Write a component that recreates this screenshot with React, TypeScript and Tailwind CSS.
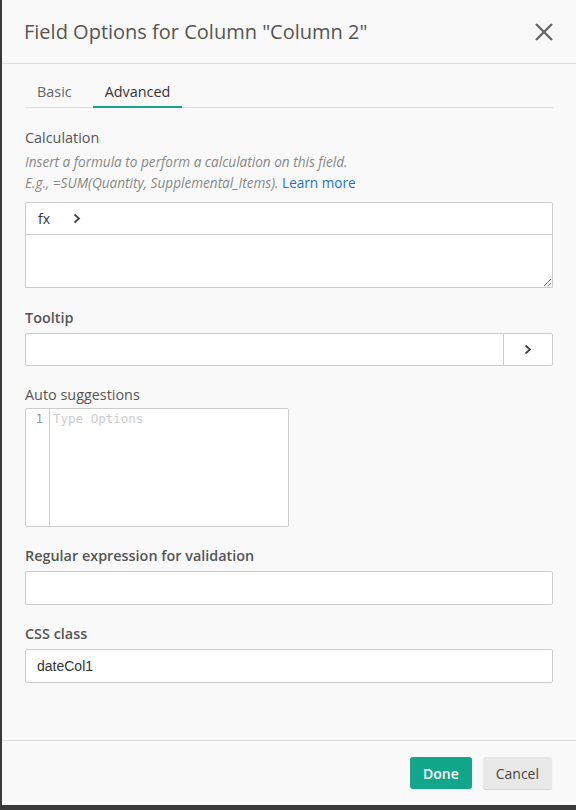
import React from "react";

const Label = ({ children, bold }: { children: React.ReactNode; bold?: boolean }) => (
  <div className={`text-[14.4px] leading-[20px] text-[#555] ${bold ? "font-semibold" : "font-normal"}`}>{children}</div>
);

const Chevron = () => (
  <svg width="8" height="11" viewBox="0 0 8 11" fill="none">
    <path d="M1.5 1.5 L6 5.5 L1.5 9.5" stroke="#444" strokeWidth="1.8" />
  </svg>
);

export default function App() {
  return (
    <div className="h-[810px] w-[576px] bg-[#3a3a3a] pl-[2px] pb-[5px] font-['Open_Sans',sans-serif]">
      <div className="flex h-full flex-col bg-[#f9f9f9]">
        {/* header */}
        <div className="flex h-[64px] items-center justify-between border-b border-[#dedede] pl-[22px] pr-[22px]">
          <h1 className="text-[20px] font-normal text-[#555]">Field Options for Column "Column 2"</h1>
          <svg width="20" height="20" viewBox="0 0 20 20">
            <path d="M2 2 L18 18 M18 2 L2 18" stroke="#666" strokeWidth="2.4" />
          </svg>
        </div>

        {/* body */}
        <div className="flex-1 pl-[23px] pr-[23px]">
          {/* tabs */}
          <div className="mt-[18px] flex border-b border-[#ddd] text-[14.4px] leading-[20px]">
            <div className="-mb-px border-b-2 border-transparent px-[12px] pb-[4px] text-[#666]">Basic</div>
            <div className="-mb-px ml-[9px] border-b-2 border-[#12a58a] px-[12px] pb-[4px] text-[#333]">Advanced</div>
          </div>

          {/* calculation */}
          <div className="mt-[20px]">
            <Label>Calculation</Label>
            <div className="mt-[3px] text-[13.6px] leading-[21px] italic text-[#888]">
              <div>Insert a formula to perform a calculation on this field.</div>
              <div>
                E.g., =SUM(Quantity, Supplemental_Items). <span className="not-italic text-[#1a73c8]">Learn more</span>
              </div>
            </div>
            <div className="mt-[9px] rounded-t-[2px] border border-[#ccc] bg-white">
              <div className="flex h-[32px] items-center gap-[23px] border-b border-[#ccc] pl-[12px] text-[14px] text-[#333]">
                <span>fx</span>
                <Chevron />
              </div>
              <textarea className="block h-[52px] w-full resize-y bg-white outline-none" />
            </div>
          </div>

          {/* tooltip */}
          <div className="mt-[20px]">
            <Label bold>Tooltip</Label>
            <div className="mt-[5px] flex h-[33px] rounded-[2px] border border-[#ccc] bg-white">
              <div className="flex-1" />
              <div className="flex w-[49px] items-center justify-center border-l border-[#ccc]">
                <Chevron />
              </div>
            </div>
          </div>

          {/* auto suggestions */}
          <div className="mt-[19px]">
            <Label>Auto suggestions</Label>
            <div className="mt-[3px] flex h-[119px] w-[264px] rounded-[2px] border border-[#ccc] bg-white font-['DejaVu_Sans_Mono',monospace] text-[12.5px] leading-[18px]">
              <div className="w-[24px] border-r border-[#ccc] pt-[1px] pr-[6px] text-right text-[#999]">1</div>
              <div className="pt-[1px] pl-[3px] text-[#ccc]">Type Options</div>
            </div>
          </div>

          {/* regex */}
          <div className="mt-[19px]">
            <Label bold>Regular expression for validation</Label>
            <div className="mt-[5px] h-[34px] rounded-[2px] border border-[#ccc] bg-white" />
          </div>

          {/* css class */}
          <div className="mt-[19px]">
            <Label bold>CSS class</Label>
            <div className="mt-[5px] flex h-[34px] items-center rounded-[2px] border border-[#ccc] bg-white pl-[11px] font-['Liberation_Sans',sans-serif] text-[14px] text-[#333]">
              dateCol1
            </div>
          </div>
        </div>

        {/* footer */}
        <div className="flex h-[65px] items-center justify-end gap-[11px] border-t border-[#dedede] pr-[24px]">
          <button className="h-[32px] rounded-[3px] bg-[#12a78b] px-[13px] text-[14px] font-semibold text-white">Done</button>
          <button className="h-[32px] rounded-[3px] bg-[#e8e8e8] px-[13px] text-[14px] text-[#444] shadow-[0_1px_1px_rgba(0,0,0,0.15)]">Cancel</button>
        </div>
      </div>
    </div>
  );
}
